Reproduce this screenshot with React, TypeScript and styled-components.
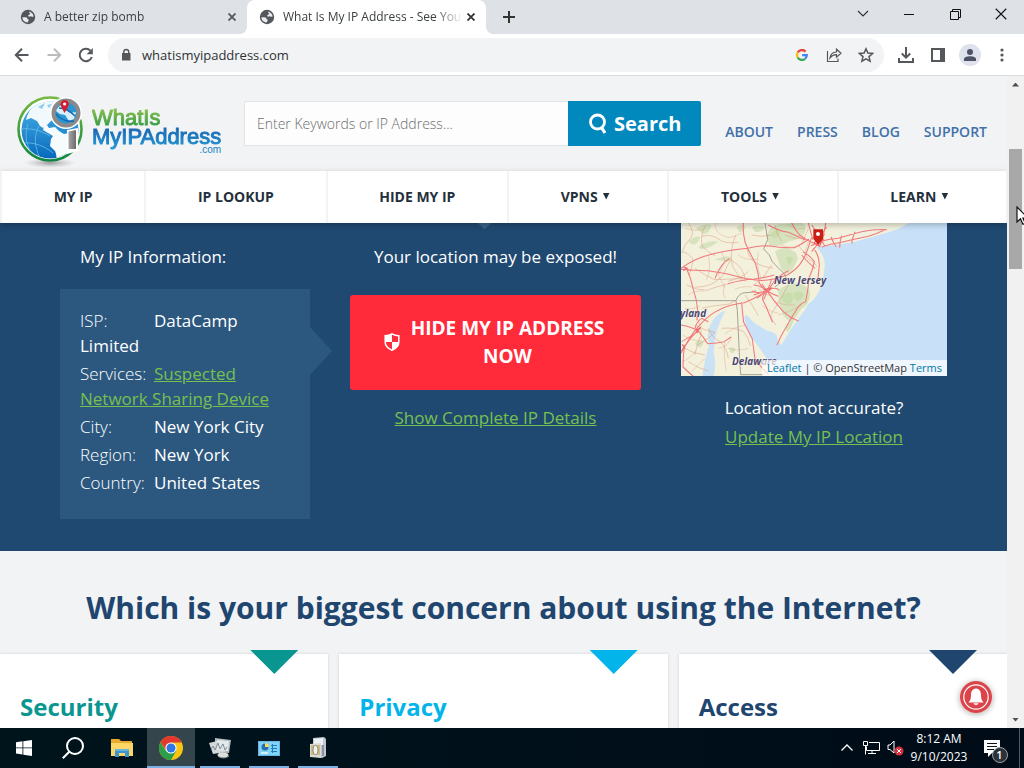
import React from "react";
import styled, { createGlobalStyle } from "styled-components";

const GlobalStyle = createGlobalStyle`
  *, *::before, *::after { box-sizing: border-box; }
  html, body { margin: 0; height: 100%; }
  body { font-family: "Open Sans", "Noto Sans", sans-serif; color: #fff; overflow: hidden; }
  button, input { font: inherit; }
  button { border: 0; padding: 0; background: none; color: inherit; }
  h1, h2, h3, p, dl, dd, dt, ul { margin: 0; padding: 0; font-weight: inherit; }
  svg { display: block; }
`;

const Desktop = styled.div`
  display: flex;
  flex-direction: column;
  height: 100vh;
  background: #f1f3f5;
`;

/* ---------- browser chrome ---------- */

const TabStrip = styled.div`
  display: flex;
  flex: none;
  height: 34px;
  padding-left: 8px;
  background: #dee1e6;
  color: #3c4043;
`;

const Tab = styled.div<{ $active?: boolean }>`
  position: relative;
  display: flex;
  align-items: center;
  width: 239px;
  padding: 0 9px 0 12px;
  gap: 8px;
  border-radius: 8px 8px 0 0;
  background: ${(p) => (p.$active ? "#fff" : "transparent")};
  &::before, &::after {
    content: "";
    display: ${(p) => (p.$active ? "block" : "none")};
    position: absolute;
    bottom: 0;
    width: 8px;
    height: 8px;
  }
  &::before { left: -8px; background: radial-gradient(circle at 0 0, transparent 8px, #fff 8px); }
  &::after { right: -8px; background: radial-gradient(circle at 100% 0, transparent 8px, #fff 8px); }
`;

const TabTitle = styled.span`
  flex: 1;
  min-width: 0;
  margin-right: -6px;
  overflow: hidden;
  white-space: nowrap;
  font-size: 12px;
  line-height: 18px;
  mask-image: linear-gradient(to right, #000 calc(100% - 28px), transparent);
`;

const IconButton = styled.button<{ $w: number; $h: number; $color?: string }>`
  display: flex;
  flex: none;
  align-items: center;
  justify-content: center;
  width: ${(p) => p.$w}px;
  height: ${(p) => p.$h}px;
  color: ${(p) => p.$color ?? "#54575b"};
`;

const NewTab = styled.div`
  display: flex;
  align-items: center;
  padding-left: 9px;
`;

const WindowControls = styled.div`
  display: flex;
  margin-left: auto;
`;

const Toolbar = styled.div`
  display: flex;
  flex: none;
  align-items: center;
  height: 42px;
  padding: 0 6px;
  background: #fff;
  border-bottom: 1px solid #dadce0;
`;

const Omnibox = styled.div`
  display: flex;
  flex: 1;
  align-items: center;
  height: 34px;
  margin: 0 6px;
  padding: 0 2px 0 10px;
  border-radius: 17px;
  background: #f1f3f4;
`;

const UrlInput = styled.input`
  flex: 1;
  min-width: 0;
  margin-left: 8px;
  padding: 0;
  border: 0;
  outline: 0;
  background: none;
  color: #303236;
  font-size: 13px;
  line-height: 20px;
`;

const Avatar = styled.span`
  display: flex;
  align-items: center;
  justify-content: center;
  width: 22px;
  height: 22px;
  border-radius: 50%;
  background: #dfe1ec;
`;

/* ---------- web page ---------- */

const Viewport = styled.div`
  display: flex;
  flex: 1;
  min-height: 0;
`;

const Page = styled.div`
  position: relative;
  flex: 1;
  min-width: 0;
  overflow: hidden;
`;

const SiteHeader = styled.header`
  display: flex;
  align-items: center;
  height: 95px;
  padding: 0 20px 0 16px;
`;

const Brand = styled.a`
  display: flex;
  flex: none;
  width: 228px;
  padding-top: 18px;
  gap: 6px;
  text-decoration: none;
`;

const BrandName = styled.span`
  display: flex;
  flex-direction: column;
  padding-top: 12px;
  font-family: "Liberation Sans", Arial, sans-serif;
`;

const BrandLine = styled.span<{ $from: string; $to: string }>`
  align-self: flex-start;
  margin-bottom: -4px;
  padding-bottom: 3px;
  background: linear-gradient(${(p) => p.$from}, ${(p) => p.$to});
  background-clip: text;
  color: transparent;
  font-size: 22px;
  line-height: 20px;
  -webkit-text-stroke: 1px transparent;
`;

const BrandSuffix = styled.span`
  align-self: flex-end;
  color: #1a80c6;
  font-size: 10px;
  line-height: 8px;
`;

const SearchForm = styled.form`
  display: flex;
  flex: 1;
  height: 45px;
`;

const SearchInput = styled.input`
  flex: 1;
  min-width: 0;
  padding: 0 12px;
  border: 1px solid #e2e5e8;
  border-right: 0;
  border-radius: 2px 0 0 2px;
  background: #fdfdfd;
  font-size: 14px;
  font-weight: 300;
  color: #444;
  &::placeholder { color: #6d6d6d; opacity: 1; }
`;

const SearchButton = styled.button`
  display: flex;
  align-items: center;
  justify-content: center;
  width: 133px;
  gap: 6px;
  border-radius: 0 2px 2px 0;
  background: #0188bd;
  font-size: 20px;
  font-weight: 700;
`;

const TopLinks = styled.nav`
  display: flex;
  gap: 24px;
  padding: 16px 0 0 24px;
`;

const TopLink = styled.a`
  color: #4270a8;
  font-size: 14px;
  font-weight: 600;
  line-height: 20px;
  text-decoration: none;
`;

const MainNav = styled.nav`
  position: relative;
  z-index: 1;
  display: flex;
  gap: 2px;
  height: 52px;
  padding: 0 1px 0 2px;
  box-shadow: 0 2px 6px rgba(0, 0, 0, 0.25);
  background: #f1f3f5;
`;

const NavItem = styled.a<{ $menu?: boolean }>`
  display: flex;
  flex: 1 1 auto;
  align-items: center;
  justify-content: center;
  gap: 5px;
  padding: 0 ${(p) => (p.$menu ? 57 : 51)}px 2px 51px;
  background: #fff;
  color: #24303c;
  font-size: 14px;
  font-weight: 700;
  white-space: nowrap;
  text-decoration: none;
`;

const NavCaret = styled.span`
  width: 7px;
  height: 7px;
  background: #24303c;
  clip-path: polygon(0 0, 100% 0, 50% 100%);
`;

const Hero = styled.section`
  position: relative;
  display: grid;
  grid-template-columns: 250fr 291fr 266fr;
  gap: 40px;
  padding: 0 60px 32px;
  background: #1f4971;
`;

const HeroNotch = styled.span`
  position: absolute;
  top: 0;
  left: calc(50% - 26px);
  width: 14px;
  height: 6px;
  background: #3a6488;
  clip-path: polygon(0 0, 100% 0, 50% 100%);
`;

const HeroColumn = styled.div<{ $center?: boolean; $flush?: boolean }>`
  min-width: 0;
  padding-top: ${(p) => (p.$flush ? 0 : 22)}px;
  text-align: ${(p) => (p.$center ? "center" : "left")};
`;

const HeroText = styled.p<{ $indent?: boolean; $after: number }>`
  padding-left: ${(p) => (p.$indent ? 20 : 0)}px;
  margin-bottom: ${(p) => p.$after}px;
  font-size: 17px;
  line-height: 24px;
`;

const GreenLink = styled.a`
  color: #76c04f;
  font-size: 17px;
`;

const InfoBox = styled.dl`
  position: relative;
  padding: 19px 20px 24px;
  background: #2c587f;
  font-size: 17px;
  line-height: 25px;
  &::after {
    content: "";
    position: absolute;
    top: 38px;
    left: 100%;
    width: 22px;
    height: 48px;
    background: #2c587f;
    clip-path: polygon(0 0, 100% 50%, 0 100%);
  }
`;

const InfoRow = styled.div`
  & + & { margin-top: 3px; }
`;

const InfoLabel = styled.dt`
  display: inline-block;
  width: 74px;
  font-weight: 300;
`;

const InfoValue = styled.dd`
  display: inline;
`;

const HideButton = styled.button`
  display: flex;
  align-items: center;
  width: 100%;
  height: 95px;
  margin-bottom: 16px;
  padding: 0 34px 2px;
  gap: 8px;
  border-radius: 3px;
  background: #ff2a3a;
  font-size: 19px;
  font-weight: 700;
  line-height: 28px;
`;

const HideLabel = styled.span`
  flex: 1;
`;

const MapFrame = styled.div`
  position: relative;
  height: 153px;
  margin-bottom: 20px;
  overflow: hidden;
  background: #c8e1f8;
  svg { width: 100%; height: 100%; }
`;

const Place = styled.span<{ $x: number; $y: number }>`
  position: absolute;
  left: ${(p) => p.$x}px;
  top: ${(p) => p.$y}px;
  color: #4b4670;
  font-size: 10px;
  font-weight: 700;
  font-style: italic;
  line-height: 12px;
  text-shadow: 0 0 2px #fff;
`;

const Attribution = styled.div`
  position: absolute;
  right: 0;
  bottom: 0;
  padding: 0 5px;
  background: rgba(255, 255, 255, 0.7);
  color: #333;
  font-size: 11px;
  line-height: 16px;
  white-space: nowrap;
`;

const MapLink = styled.a`
  color: #0078a8;
  text-decoration: none;
`;

const Concerns = styled.section`
  padding-top: 37px;
`;

const ConcernTitle = styled.h1`
  margin-bottom: 26px;
  color: #20456f;
  font-size: 30px;
  font-weight: 700;
  line-height: 40px;
  text-align: center;
`;

const CardGrid = styled.div`
  display: grid;
  grid-template-columns: repeat(3, 1fr);
  gap: 11px;
`;

const Card = styled.article<{ $color: string }>`
  position: relative;
  height: 240px;
  padding: 37px 20px;
  background: #fff;
  box-shadow: 0 0 3px rgba(0, 0, 0, 0.14);
  color: ${(p) => p.$color};
  &::before {
    content: "";
    position: absolute;
    top: -4px;
    right: 30px;
    width: 48px;
    height: 24px;
    background: ${(p) => p.$color};
    clip-path: polygon(0 0, 100% 0, 50% 100%);
  }
`;

const CardTitle = styled.h2`
  font-size: 24px;
  font-weight: 700;
  line-height: 32px;
`;

const BellButton = styled.button`
  position: absolute;
  right: 15px;
  bottom: 15px;
  width: 32px;
  height: 32px;
  border-radius: 50%;
  box-shadow: 0 1px 6px rgba(0, 0, 0, 0.35);
`;

const Scrollbar = styled.div`
  position: relative;
  display: flex;
  flex: none;
  flex-direction: column;
  width: 17px;
  background: #f1f1f1;
`;

const ScrollArrow = styled.button<{ $down?: boolean }>`
  flex: none;
  height: 17px;
  &::before {
    content: "";
    display: block;
    width: 7px;
    height: 4px;
    margin: 0 auto;
    background: #505050;
    clip-path: ${(p) => (p.$down ? "polygon(0 0, 100% 0, 50% 100%)" : "polygon(50% 0, 100% 100%, 0 100%)")};
  }
`;

const ScrollTrack = styled.div`
  flex: 1;
  padding: 56px 2px 0;
`;

const ScrollThumb = styled.div`
  height: 120px;
  background: #a8a8a8;
`;

const Pointer = styled.svg`
  position: absolute;
  top: 130px;
  left: 9px;
`;

/* ---------- desktop taskbar ---------- */

const Taskbar = styled.footer`
  display: flex;
  flex: none;
  height: 40px;
  background: linear-gradient(to right, #00141c, #000c18);
`;

const TaskButton = styled.button<{ $active?: boolean; $open?: boolean }>`
  display: flex;
  position: relative;
  align-items: center;
  justify-content: center;
  width: 48px;
  margin-right: 1px;
  background: ${(p) => (p.$active ? "#35454c" : "none")};
  &::after {
    content: "";
    display: ${(p) => (p.$open || p.$active ? "block" : "none")};
    position: absolute;
    bottom: 0;
    left: ${(p) => (p.$active ? 0 : 4)}px;
    right: ${(p) => (p.$active ? 0 : 4)}px;
    height: 2px;
    background: #7bb0e4;
  }
`;

const Tray = styled.div`
  display: flex;
  align-items: center;
  margin-left: auto;
`;

const Clock = styled.time`
  width: 64px;
  font-size: 12px;
  line-height: 18px;
  text-align: center;
  white-space: nowrap;
`;

const ShowDesktop = styled.span`
  width: 5px;
  height: 40px;
  margin-left: 6px;
  border-left: 1px solid #4d5a66;
`;

const NoteBadge = styled.span`
  position: relative;
`;

const Count = styled.span`
  position: absolute;
  top: 7px;
  left: 8px;
  width: 16px;
  height: 16px;
  border: 1px solid #99a0a6;
  border-radius: 50%;
  background: #2c3238;
  font-size: 11px;
  font-weight: 600;
  line-height: 14px;
  text-align: center;
`;

/* ---------- drawings ---------- */

const Globe = () => (
  <svg width="16" height="16" viewBox="0 0 16 16">
    <circle cx="8" cy="8" r="7.200" fill="#53575c" />
    <path d="M2.400 8.300c1.500-.2 3-.1 4.200.3.900.4.400 1.300 1.300 1.600 1 .2 1.100 1 .6 1.600-.5.500-.3 1.100-.9 1.700-2.900-.1-5.200-2.300-5.200-5.200zM9 2.500c2.500.5 4.400 2.500 4.600 5-.9.600-1.800.4-2.500-.2-.8-.3-1.300.5-2.300.3-.9-.3-.9-1.300.1-1.500.8-.1.400-1 1.100-1.400.4-.3.200-.8-.3-.9-.7-.1-.9-.6-.7-1.300z" fill="#e9ebee" />
  </svg>
);

const Cross = ({ size = 8, w = 1.8, color = "currentColor" }: { size?: number; w?: number; color?: string }) => (
  <svg width={size} height={size} viewBox="0 0 8 8"><path d="M.5.5l7 7M7.5.5l-7 7" stroke={color} strokeWidth={(w * 8) / size} /></svg>
);

const Arrow = ({ flip }: { flip?: boolean }) => (
  <svg width="16" height="16" viewBox="0 0 16 16" fill="none" stroke="currentColor" strokeWidth="2">
    {flip ? <path d="M1.500 8h12M8 1.800 14.200 8 8 14.200" /> : <path d="M14.500 8h-12M8 1.800 1.800 8 8 14.200" />}
  </svg>
);

const BrandMark = () => (
  <svg width="70" height="74" viewBox="0 0 70 74">
    <defs>
      <linearGradient id="ring" x1="0" y1="0" x2="0" y2="1"><stop offset="0" stopColor="#76b843" /><stop offset="1" stopColor="#118541" /></linearGradient>
      <linearGradient id="sea" x1="0" y1="0" x2="0" y2="1"><stop offset="0" stopColor="#49b5e8" /><stop offset="1" stopColor="#0869bd" /></linearGradient>
      <linearGradient id="grip" x1="0" y1="0" x2="1" y2="0"><stop offset="0" stopColor="#a7a5a5" /><stop offset="1" stopColor="#6f6b6b" /></linearGradient>
      <radialGradient id="shade"><stop offset="0" stopColor="#777" stopOpacity=".7" /><stop offset="1" stopColor="#aaa" stopOpacity="0" /></radialGradient>
      <clipPath id="ball"><circle cx="34" cy="34" r="28.500" /></clipPath>
    </defs>
    <ellipse cx="34" cy="67" rx="26" ry="5" fill="url(#shade)" />
    <circle cx="34" cy="33" r="31.500" fill="#fff" stroke="url(#ring)" strokeWidth="2.600" />
    <circle cx="34" cy="34" r="28.500" fill="url(#sea)" />
    <g clipPath="url(#ball)">
      <path d="M14 14c5-7 12-10 20-10 4 0 7 0 10 2l-8 8 1 9-6 6-4 3-3-2-3-5-6-3-5 2 1-4z" fill="#f2f9fc" />
      <path d="M28 30l3-1 2 3 6-1 4 4 5 3 5-1 5 2v22l-8 4-8 2c-2-4-1-8-3-12l-5-5 1-7 2-3-5-3-5-3z" fill="#f6fbfd" />
      <path d="M22 11l7-4-3 6zM31 9l5-1-3 4z" fill="#8ccdee" />
      <path d="M4 33c11-1 20 1 30 7M7 47c11-1 22 3 30 10M23 30c-5 9-5 20 1 32M12 28c-3 8-3 18 3 28" fill="none" stroke="#6bbce9" strokeWidth=".8" />
    </g>
    <path d="M51 34l11-2v23l-11 3z" fill="#fff" />
    <path d="M52.500 35.500l7.500-1.500v19h-7.500z" fill="url(#grip)" />
    <circle cx="50" cy="17" r="13" fill="#2693d2" stroke="#fff" strokeWidth="6" />
    <circle cx="50" cy="17" r="12.500" fill="#2c96d3" stroke="#8b898a" strokeWidth="4" />
    <path d="M40 15c2-5 7-8 12-7l-2 5 4 4 6-1-2 7-5 2-4-6-5-1z" fill="#d7effa" />
    <path d="M40 18c4 5 11 8 18 7M43 12c5 0 11 3 16 8" fill="none" stroke="#1169b4" strokeWidth="1.400" />
    <path d="M48.500 17l-3.600-7a4.200 4.200 0 1 1 7.500 0z" fill="#d51d2c" />
    <circle cx="48.600" cy="8" r="1.600" fill="#fff" />
  </svg>
);

const CoastMap = () => (
  <svg viewBox="18 24 798 459" preserveAspectRatio="xMidYMid slice">
    <path d="M18 24h680q-30 20-70 30l-95 28-70 10-38 4 16 22q10 16 8 36-2 30-8 46-4 24-14 38-10 18-28 30-10 22-28 42-20 28-34 50l-18 30-12-12q4-18-14-26-20-4-38-18-24-12-36-32-12-6-10 12 6 34 26 60 20 26 34 48 14 20 24 36v25H18z" fill="#f3f1dc" />
    <path d="M152 286q-34 14-46 44-14 34-2 56-14 36-22 97h34q10-40 0-70 2-40 10-66 8-28 26-61z" fill="#cbe2f5" />
    <path d="M440 70l70-26 100-20h90q-30 20-60 28l-80 22-60 12z" fill="#f1f1e0" />
    <g fill="#d3e2bb" opacity=".9">
      <path d="M275 60q10-26 36-32l70-4q20 12 4 36-26 18-40 18-40 22-62 14zM300 110q26-16 44-8 26 10 24 30-12 34-30 44-20-8-22-22zM310 225q30-24 60-20 34 8 36 34-4 30-30 46-12 22-26 36-22-8-28-28-14-34-12-68zM60 40q30-16 50-10-8 30-26 26zM40 80q20-20 36-14-10 26-24 22zM120 134q30-14 52-8-10 20-26 12zM330 340q14-22 28-28-8 26-20 40z" />
      <path d="M70 96q26-22 60-16-26 20-52 22zM184 36q20-10 28 0-10 20-20 14zM60 386q10-16 26-8-2 20-16 20zM162 400q10-8 20 2-4 14-14 12zM230 36q24-8 40 0-14 20-30 14z" />
    </g>
    <g fill="#c3d8a3" opacity=".7">
      <path d="M286 60q16-20 34-14-8 22-24 24zM320 246q16-20 30-10 10 20-8 32-18 0-22-22zM352 236q20-12 34 0-6 24-22 20zM334 128q16-8 20 6-10 20-16 12z" />
    </g>
    <g fill="none" stroke="#777d72" strokeWidth="2">
      <path d="M18 257h165l4 30 6 130 4 62h70M183 257q8-24 30-24t30-6M270 24l8 50-12 28q20 16 26 38 20 22 36 36l6 14-34 26" />
    </g>
    <g fill="none" stroke="#d88a72" strokeWidth="1.600" strokeLinejoin="round" opacity=".8">
      <path d="M40 24q20 26 8 44-20 20-28 46M80 64q30-8 50 8t60 10M90 34q-16 30-8 60 20 20 38 28M168 132q-14 24-22 46-20 24-38 30-24 10-48 8M160 130q24 12 38 30 14 20 12 40M60 160q28 20 58 34 50-2 90-4M215 100q4 24 22 42 26 14 58 18M220 170q-26 22-60 28M100 340q10 28 36 40 20 20 24 50M40 440q30 20 60 28M60 300q20 30 18 60-14 30-18 60M80 280q30-8 60-10 26 0 40-12" />
      <path d="M300 30q4 30 20 48M370 90q18 24 30 42 20 10 26 22M345 200q-26 50-58 100 4 20 16 30M400 40l-18 42M330 60q30 14 60 12M24 110q20 6 30 22-4 30-12 50M182 60q-20 50-10 92 14 26 30 46M230 60q30 8 60 0M290 150q-20 36-52 60M250 220q20 20 40 24M210 240q20 24 40 62M30 400q24 16 60 20M60 330q26 16 60 22-20 20-52 38M140 340q40-4 66 10 14 16 20 42M35 210q30 16 60 16 30-12 62-18" />
      <path d="M30 40q40 12 60 0M120 24q-2 30 30 40 16 10 50-10M140 110l10 30-20 40 20 40M100 120q10 40-6 76M250 110q-8 40 8 80M190 120q20 18 60 12M180 222q30-10 50-6M40 240q20-14 48-12M150 250q-10-20 0-46M320 90q30 12 50 2M390 110l10-30M340 30q20 16 50 10M150 380q-6 40 4 90M210 330q-30 4-60 26M220 400q-30 10-60 0M240 440q-30-4-46 10M130 400q30-4 40-34M30 280q30 4 44-8M20 440q30-10 44-36M50 470l40-40M24 360q30 20 50 16M300 260q30 14 60 10M310 300q40-10 70-30M260 270q20 20 50 24" strokeWidth="1.200" />
    </g>
    <g fill="none" stroke="#f07a7d" strokeWidth="3.200" strokeLinejoin="round">
      <path d="M18 160q34-24 70-36 60-18 130-24 36-8 60-8 44 8 80 6 26-12 44-26M18 163q40 4 80 4 30 4 60 10 34 10 60 14 36 8 60 4 36-6 60-16 24-14 36-30 16-22 24-46l12-36M205 24q-2 30 6 60 14 32 30 60 10 30 12 60 10 18 22 24M18 415q20-38 40-66 26-32 50-50 30-20 60-28 22-6 40-8 34-14 66-34 18-18 26-34 20-18 40-28M158 206q44-12 80-14 34-4 60-12M275 230q-14 10-12 24 14 26 22 50 4 10 8 18M200 262q2 30 6 60 14 26 26 50 4 32 8 60 20 28 40 46M275 226q24 36 50 64 22 20 46 28M306 390q10-24 22-44 18-34 40-68 10-14 24-18 8-36 10-70 12-28 16-50-14-20-34-30M34 160q14 28 20 60 12 34 14 66l-2 30" />
      <path d="M280 30q30 18 60 22 26 12 50 22M350 24q10 20 24 36 20 16 40 24M400 24q6 26 14 50M452 24q-4 30-12 50-16 18-30 36M455 36q-14 18-20 34l14 22M410 30q16 24 36 44-18 10-38 18M468 66q6 16 16 30M430 82q30-10 60-12 36-12 70-20 40-8 76-6M440 96q30-10 60-14 40-10 80-18 30-10 50-20M500 62q-6 18-6 36M540 50q-8 18-10 36M415 100q18 20 18 50l-4 40M380 120q18 22 40 40M120 190q12-30 30-50l12-8" />
      <path d="M18 330q30 6 50 16 18 20 30 40 30-2 50-6l20-14M68 346q-24 24-40 50-4 30-4 60 14 14 30 27M60 340q4-20 20-30l20 10M30 390l-12 20M20 380q30-18 50-30M236 240q24-8 40-14 10-16 14-34M246 250q18-14 30-24-18-14-40-16M260 206q8 14 20 24 18 10 30 14M286 222q20-6 26 4M230 228q20 10 46-2M276 230l-10 24" />
    </g>
    <g fill="none" stroke="#ec6a70" strokeWidth="4"><path d="M416 84l30-24-12 34zM266 224l22-4-10 12M62 346l12-6-8 12M26 156l10 4-12 6M22 388l8 14" /></g>
    <path d="M415 43h29v28l-14 19-15-19z" fill="#c91f13" />
    <circle cx="429" cy="57" r="6" fill="#fff" />
  </svg>
);

const Shield = () => (
  <svg width="16" height="18" viewBox="0 0 16 18">
    <path d="M8 .8c2.300 1.300 4.600 1.800 6.800 1.900v6.500c0 3.800-3.300 6.500-6.800 8-3.500-1.500-6.800-4.200-6.800-8V2.700C3.400 2.600 5.700 2.100 8 .8z" fill="none" stroke="#fff" strokeWidth="1.500" />
    <path d="M8 1v8H1V3c2.600-.1 4.800-.7 7-2zM8 9h7c0 4-3.500 6.500-7 8z" fill="#fff" />
  </svg>
);

const Bell = () => (
  <svg width="32" height="32" viewBox="0 0 32 32">
    <circle cx="16" cy="16" r="16" fill="#dc4449" />
    <circle cx="16" cy="16" r="12.200" fill="none" stroke="#fff" strokeWidth="1.200" />
    <path d="M16 7.500c-4 .5-5 3.500-5 6.500 0 4-.8 5.400-2.500 7.500h15C21.800 19.400 21 18 21 14c0-3-1-6-5-6.500z" fill="#fff" />
    <path d="M13.500 22.300h5c-.4 2.200-4.600 2.200-5 0z" fill="#fff" />
  </svg>
);

const ChromeLogo = () => (
  <svg width="24" height="24" viewBox="0 0 24 24">
    <circle cx="12" cy="12" r="12" fill="#f9c513" />
    <path d="M1.600 6A12 12 0 0 0 12 24l5.200-9L12 12 6.800 15z" fill="#2d9e48" />
    <path d="M12 6.500h10.700A12 12 0 0 0 1.600 6l5.500 8.500z" fill="#e23a2e" />
    <circle cx="12" cy="12" r="5.600" fill="#fff" />
    <circle cx="12" cy="12" r="4.500" fill="#2f76e8" />
  </svg>
);

const FolderIcon = () => (
  <svg width="24" height="20" viewBox="0 0 24 20">
    <path d="M1 1h8l2 2h11v15H1z" fill="#e8a92d" />
    <path d="M1 5h22v13H1z" fill="#fcd667" />
    <path d="M5 19v-8h14v8h-4v-4H9v4z" fill="#3d94cf" />
    <path d="M5 11h14v2H5z" fill="#65b5df" />
  </svg>
);

const MonitorIcon = () => (
  <svg width="24" height="24" viewBox="0 0 24 24">
    <path d="M7 2l16 2-2 13-14-1z" fill="#b4bcc0" />
    <path d="M1 7l12-3 4 12-12 2z" fill="#d3d8da" />
    <path d="M9 4l12 1-1 10-11-1z" fill="#e3e8ea" />
    <path d="M3 13l2-3 2 4 3-7 2 6 3-5 2 6 2-3" fill="none" stroke="#75838a" strokeWidth=".9" />
    <ellipse cx="15" cy="19" rx="5.500" ry="2.800" fill="#dce0dc" />
    <path d="M10 20c3 2.500 8 2.500 11 0" stroke="#8f9896" fill="none" />
  </svg>
);

const ControlPanelIcon = () => (
  <svg width="22" height="17" viewBox="0 0 22 17">
    <path d="M0 1h22v15H0z" fill="#5fb8ea" /><path d="M1 2h20v13H1z" fill="#83d2f6" />
    <circle cx="7" cy="7" r="3.500" fill="#246fb5" /><path d="M7 7V3a4 4 0 0 1 4 4z" fill="#f7dc58" />
    <path d="M13 5.500h6M13 8.500h6M13 11.500h6M14.500 4v9" stroke="#1d7cc0" /><path d="M3 13h7" stroke="#e7f8ff" strokeWidth="1.500" />
  </svg>
);

const InstallerIcon = () => (
  <svg width="20" height="24" viewBox="0 0 20 24">
    <path d="M5 2l11-1 2 2v17l-4 2-9-2z" fill="#bfc7d2" /><path d="M6 3l9-1v7H6z" fill="#eef1f6" />
    <path d="M2 8l11-1v15L2 21z" fill="#d9dad4" /><path d="M3 9h9v10H3z" fill="#cdbb82" />
    <ellipse cx="7.500" cy="14" rx="2.500" ry="4.500" fill="#f0f1ec" stroke="#8a8a80" /><path d="M15 9v11" stroke="#8d949e" strokeWidth="2" />
  </svg>
);

const navItems = [
  { label: "MY IP" }, { label: "IP LOOKUP" }, { label: "HIDE MY IP" },
  { label: "VPNS", menu: true }, { label: "TOOLS", menu: true }, { label: "LEARN", menu: true },
];

const details = [
  { label: "ISP:", value: "DataCamp Limited" },
  { label: "Services:", value: "Suspected Network Sharing Device", link: true },
  { label: "City:", value: "New York City" },
  { label: "Region:", value: "New York" },
  { label: "Country:", value: "United States" },
];

const concerns = [
  { title: "Security", color: "#0a9690" },
  { title: "Privacy", color: "#03b4ea" },
  { title: "Access", color: "#20456f" },
];

export default function App() {
  return (
    <Desktop>
      <GlobalStyle />
      <TabStrip>
        <Tab>
          <Globe />
          <TabTitle>A better zip bomb</TabTitle>
          <IconButton $w={12} $h={16} aria-label="Close tab"><Cross /></IconButton>
        </Tab>
        <Tab $active>
          <Globe />
          <TabTitle>What Is My IP Address - See You</TabTitle>
          <IconButton $w={12} $h={16} $color="#333" aria-label="Close tab"><Cross /></IconButton>
        </Tab>
        <NewTab>
          <IconButton $w={28} $h={28} $color="#333" aria-label="New tab">
            <svg width="12" height="12" viewBox="0 0 12 12"><path d="M6 0v12M0 6h12" stroke="currentColor" strokeWidth="2" /></svg>
          </IconButton>
        </NewTab>
        <WindowControls>
          <IconButton $w={46} $h={28} $color="#333" aria-label="Search tabs">
            <svg width="12" height="8" viewBox="0 0 12 8"><path d="M1 1l5 5 5-5" fill="none" stroke="currentColor" strokeWidth="1.200" /></svg>
          </IconButton>
          <IconButton $w={46} $h={28} $color="#111" aria-label="Minimize">
            <svg width="10" height="1" viewBox="0 0 10 1"><path d="M0 .5h10" stroke="currentColor" /></svg>
          </IconButton>
          <IconButton $w={46} $h={28} $color="#111" aria-label="Restore">
            <svg width="11" height="11" viewBox="0 0 11 11" fill="none" stroke="currentColor"><path d="M.5 2.500h8v8h-8zM2.500 2.500v-2h8v8h-2" /></svg>
          </IconButton>
          <IconButton $w={46} $h={28} $color="#111" aria-label="Close"><Cross size={12} w={1.1} /></IconButton>
        </WindowControls>
      </TabStrip>

      <Toolbar>
        <IconButton $w={32} $h={32} aria-label="Back"><Arrow /></IconButton>
        <IconButton $w={32} $h={32} $color="#babcbe" aria-label="Forward"><Arrow flip /></IconButton>
        <IconButton $w={32} $h={32} aria-label="Reload">
          <svg width="16" height="16" viewBox="0 0 16 16"><path d="M13.800 10A6.200 6.200 0 1 1 12.400 3.600" fill="none" stroke="currentColor" strokeWidth="2" /><path d="M14.800 1v6.200H8.600z" fill="currentColor" /></svg>
        </IconButton>
        <Omnibox>
          <svg width="16" height="14" viewBox="0 0 16 14"><path d="M4 5h8.500v7.500H4z" fill="#54575b" /><path d="M5.800 5.500V4a2.450 2.450 0 0 1 4.900 0v1.500" fill="none" stroke="#54575b" strokeWidth="1.400" /></svg>
          <UrlInput aria-label="Address" defaultValue="whatismyipaddress.com" />
          <IconButton $w={32} $h={32} aria-label="Google">
            <svg width="12" height="12" viewBox="0 0 24 24" fill="none" strokeWidth="4.600">
              <path d="M3.500 7A9.700 9.700 0 0 1 19 5.200" stroke="#e94335" /><path d="M3.500 7a9.700 9.700 0 0 0 0 10" stroke="#fbbc05" />
              <path d="M3.500 17A9.700 9.700 0 0 0 18.300 19.500" stroke="#34a853" /><path d="M18.300 19.500c2.200-2 3.300-4.500 3.300-7.400H12.300" stroke="#4285f4" />
            </svg>
          </IconButton>
          <IconButton $w={32} $h={32} aria-label="Share">
            <svg width="16" height="16" viewBox="0 0 16 16" fill="none" stroke="currentColor" strokeWidth="1.200"><path d="M1.500 4v10.500h10.500v-3M4 11c.5-4 3-5.800 6.500-6V2.200L15 6.200l-4.500 4V7.600C7.800 7.500 5.800 8.600 4 11z" /></svg>
          </IconButton>
          <IconButton $w={32} $h={32} aria-label="Bookmark">
            <svg width="16" height="16" viewBox="0 0 16 16" fill="none" stroke="currentColor" strokeWidth="1.500"><path d="M8 1.800l1.900 4.300 4.700.4-3.600 3.100 1.100 4.600L8 11.800l-4.100 2.400L5 9.600 1.400 6.500l4.700-.4z" /></svg>
          </IconButton>
        </Omnibox>
        <IconButton $w={32} $h={32} aria-label="Downloads">
          <svg width="16" height="16" viewBox="0 0 16 16" fill="none" stroke="currentColor" strokeWidth="2"><path d="M8 0v10M3.800 6.500L8 10.700l4.200-4.200M1 11v4h14v-4" /></svg>
        </IconButton>
        <IconButton $w={32} $h={32} aria-label="Side panel">
          <svg width="14" height="14" viewBox="0 0 14 14"><path d="M1 1h12v12H1z" fill="none" stroke="currentColor" strokeWidth="2" /><path d="M9 1h4v12H9z" fill="currentColor" /></svg>
        </IconButton>
        <IconButton $w={32} $h={32} $color="#4c5264" aria-label="Profile">
          <Avatar><svg width="12" height="12" viewBox="0 0 12 12" fill="currentColor"><circle cx="6" cy="3" r="3" /><path d="M0 12V9.800C0 8 3.500 7.200 6 7.200s6 .8 6 2.600V12z" /></svg></Avatar>
        </IconButton>
        <IconButton $w={32} $h={32} aria-label="Menu">
          <svg width="4" height="14" viewBox="0 0 4 14" fill="currentColor"><circle cx="2" cy="2" r="1.600" /><circle cx="2" cy="7" r="1.600" /><circle cx="2" cy="12" r="1.600" /></svg>
        </IconButton>
      </Toolbar>

      <Viewport>
        <Page>
          <SiteHeader>
            <Brand href="#">
              <BrandMark />
              <BrandName>
                <BrandLine $from="#8bc04a" $to="#1f9146">WhatIs</BrandLine>
                <BrandLine $from="#1a62ad" $to="#1f9ad8">MyIPAddress</BrandLine>
                <BrandSuffix>.com</BrandSuffix>
              </BrandName>
            </Brand>
            <SearchForm onSubmit={(e) => e.preventDefault()}>
              <SearchInput aria-label="Search" placeholder="Enter Keywords or IP Address..." />
              <SearchButton type="submit">
                <svg width="20" height="22" viewBox="0 0 20 22" fill="none" stroke="#fff"><circle cx="9.500" cy="9" r="7" strokeWidth="2.800" /><path d="M13.500 14.500l3.500 5.500" strokeWidth="3.200" /></svg>
                Search
              </SearchButton>
            </SearchForm>
            <TopLinks>
              {["ABOUT", "PRESS", "BLOG", "SUPPORT"].map((t) => <TopLink key={t} href="#">{t}</TopLink>)}
            </TopLinks>
          </SiteHeader>

          <MainNav>
            {navItems.map((n) => (
              <NavItem key={n.label} href="#" $menu={n.menu}>
                {n.label}
                {n.menu && <NavCaret />}
              </NavItem>
            ))}
          </MainNav>

          <Hero>
            <HeroNotch />
            <HeroColumn>
              <HeroText $indent $after={20}>My IP Information:</HeroText>
              <InfoBox>
                {details.map((d) => (
                  <InfoRow key={d.label}>
                    <InfoLabel>{d.label}</InfoLabel>
                    <InfoValue>{d.link ? <GreenLink href="#">{d.value}</GreenLink> : d.value}</InfoValue>
                  </InfoRow>
                ))}
              </InfoBox>
            </HeroColumn>
            <HeroColumn $center>
              <HeroText $after={26}>Your location may be exposed!</HeroText>
              <HideButton>
                <Shield />
                <HideLabel>HIDE MY IP ADDRESS NOW</HideLabel>
              </HideButton>
              <GreenLink href="#">Show Complete IP Details</GreenLink>
            </HeroColumn>
            <HeroColumn $center $flush>
              <MapFrame>
                <CoastMap />
                <Place $x={93} $y={51}>New Jersey</Place>
                <Place $x={-1} $y={84}>yland</Place>
                <Place $x={51} $y={132}>Delaware</Place>
                <Attribution>
                  <MapLink href="#">Leaflet</MapLink> | © OpenStreetMap <MapLink href="#">Terms</MapLink>
                </Attribution>
              </MapFrame>
              <HeroText $after={5}>Location not accurate?</HeroText>
              <GreenLink href="#">Update My IP Location</GreenLink>
            </HeroColumn>
          </Hero>

          <Concerns>
            <ConcernTitle>Which is your biggest concern about using the Internet?</ConcernTitle>
            <CardGrid>
              {concerns.map((c) => (
                <Card key={c.title} $color={c.color}><CardTitle>{c.title}</CardTitle></Card>
              ))}
            </CardGrid>
          </Concerns>
          <BellButton aria-label="Notifications"><Bell /></BellButton>
        </Page>
        <Scrollbar>
          <ScrollArrow aria-label="Scroll up" />
          <ScrollTrack><ScrollThumb /></ScrollTrack>
          <ScrollArrow $down aria-label="Scroll down" />
          <Pointer width="13" height="20" viewBox="0 0 13 20"><path d="M1 1v15l3.500-3.200 2.400 5.500 2.400-1-2.400-5.300H12z" fill="#fff" stroke="#111" strokeWidth="1.200" /></Pointer>
        </Scrollbar>
      </Viewport>

      <Taskbar>
        <TaskButton aria-label="Start">
          <svg width="16" height="16" viewBox="0 0 16 16" fill="#fff"><path d="M0 2.200L6.500 1.300v6.200H0zM7.300 1.200L16 0v7.500H7.300zM0 8.300h6.500v6.200L0 13.600zM7.300 8.300H16V16l-8.700-1.200z" /></svg>
        </TaskButton>
        <TaskButton aria-label="Search">
          <svg width="22" height="22" viewBox="0 0 22 22" fill="none" stroke="#fff" strokeWidth="2"><circle cx="13" cy="9" r="8" /><path d="M7.500 14.500L.8 21.200" /></svg>
        </TaskButton>
        <TaskButton aria-label="File Explorer"><FolderIcon /></TaskButton>
        <TaskButton $active aria-label="Chrome"><ChromeLogo /></TaskButton>
        <TaskButton $open aria-label="Monitor"><MonitorIcon /></TaskButton>
        <TaskButton $open aria-label="Control Panel"><ControlPanelIcon /></TaskButton>
        <TaskButton $open aria-label="Installer"><InstallerIcon /></TaskButton>
        <Tray>
          <IconButton $w={24} $h={40} $color="#fff" aria-label="Show hidden icons">
            <svg width="12" height="8" viewBox="0 0 12 8"><path d="M.5 6.500L6 1l5.500 5.500" fill="none" stroke="currentColor" strokeWidth="1.300" /></svg>
          </IconButton>
          <IconButton $w={24} $h={40} $color="#fff" aria-label="Network">
            <svg width="17" height="14" viewBox="0 0 17 14" fill="none" stroke="currentColor"><path d="M6 1.500h10.500v8H3.500v-4M.5.500h4v4h-4zM2.500 4.500v9M5 12.500h8M9 9.500v3" /></svg>
          </IconButton>
          <IconButton $w={24} $h={40} $color="#fff" aria-label="Volume muted">
            <svg width="17" height="16" viewBox="0 0 17 16" fill="none" stroke="currentColor"><path d="M1 5h2l4-4v12L3 9.500H1z" /><circle cx="12" cy="11" r="4.500" fill="#d42f3c" stroke="none" /><path d="M10 9l4 4M14 9l-4 4" /></svg>
          </IconButton>
          <Clock>8:12 AM<br />9/10/2023</Clock>
          <IconButton $w={42} $h={40} $color="#fff" aria-label="Notification center, 1 new">
            <NoteBadge>
              <svg width="17" height="17" viewBox="0 0 17 17"><path d="M0 0h16v13H8l-4 4v-4H0z" fill="#fff" /><path d="M3 3.500h10M3 6.500h10M3 9.500h7" stroke="#0a1520" /></svg>
              <Count>1</Count>
            </NoteBadge>
          </IconButton>
          <ShowDesktop />
        </Tray>
      </Taskbar>
    </Desktop>
  );
}
